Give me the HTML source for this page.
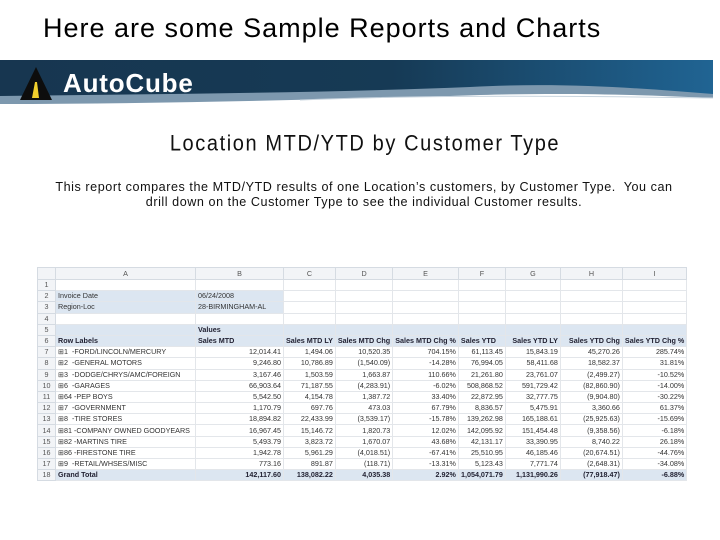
<!DOCTYPE html>
<html><head><meta charset="utf-8"><style>
body{margin:0;width:720px;height:540px;background:#fff;overflow:hidden;position:relative;font-family:"Liberation Sans",sans-serif}
.t{position:absolute;left:43px;top:13px;font-size:27px;color:#000;letter-spacing:1px;white-space:nowrap}
.h2{position:absolute;left:0;width:730px;text-align:center;top:133px;font-size:20px;color:#111;letter-spacing:1.6px;transform:scaleY(1.1)}
.p{position:absolute;left:0;width:728px;text-align:center;top:180px;font-size:12.6px;line-height:15px;color:#111;letter-spacing:0.55px;white-space:nowrap}
table{position:absolute;left:37px;top:267px;border-collapse:collapse;table-layout:fixed;font-size:7.2px;color:#333}
td{height:10.2px;padding:0 2px;border:1px solid #e3e6ea;white-space:nowrap;overflow:hidden;line-height:10px}
tr.hd td{height:11px;background:#f2f4f7;text-align:center;color:#555;border-color:#d5dbe2}
td.n{background:#f2f4f7;text-align:center;color:#555;border-color:#d5dbe2}
.bl td{background:#dce6f1;font-weight:bold;color:#223}
.bl td.n{background:#f2f4f7;color:#555;font-weight:normal}
td.r{text-align:right}
.lb{background:#dce6f1}
</style></head><body>
<div class="t">Here are some Sample Reports and Charts</div>
<svg style="position:absolute;left:0;top:60px" width="720" height="50">
<defs><linearGradient id="g" x1="0" x2="1"><stop offset="0" stop-color="#173650"/><stop offset="0.55" stop-color="#163a55"/><stop offset="1" stop-color="#206493"/></linearGradient></defs>
<path d="M0 0H713V38C600 33 540 33 450 36C300 40 150 44 0 44Z" fill="#7d98ae"/>
<path d="M0 0H713V34C640 28 560 22 470 27C320 33 160 34 0 36Z" fill="url(#g)"/>
<path d="M300 40C400 36 520 35 713 38" stroke="#c8d4de" stroke-width="1" fill="none"/>
<polygon points="36,7 20,40 52,40" fill="#0d0d0d"/>
<polygon points="35,22 32,38 39,38 37,22" fill="#f2cf2d"/>
<text x="63" y="32" font-family="Liberation Sans" font-weight="bold" font-size="26" letter-spacing="0.8" fill="#fff">AutoCube</text>
</svg>
<div class="h2">Location MTD/YTD by Customer Type</div>
<div class="p">This report compares the MTD/YTD results of one Location’s customers, by Customer Type.&nbsp; You can<br>drill down on the Customer Type to see the individual Customer results.</div>
<table>
<colgroup><col style="width:18px"><col style="width:140px"><col style="width:88px"><col style="width:50px"><col style="width:55px"><col style="width:65px"><col style="width:47px"><col style="width:55px"><col style="width:62px"><col style="width:61px"></colgroup>
<tr class="hd"><td></td><td>A</td><td>B</td><td>C</td><td>D</td><td>E</td><td>F</td><td>G</td><td>H</td><td>I</td></tr>
<tr><td class="n">1</td><td></td><td></td><td></td><td></td><td></td><td></td><td></td><td></td><td></td></tr>
<tr><td class="n">2</td><td class="lb">Invoice Date</td><td class="lb">06/24/2008</td><td></td><td></td><td></td><td></td><td></td><td></td><td></td></tr>
<tr><td class="n">3</td><td class="lb">Region-Loc</td><td class="lb">28-BIRMINGHAM-AL</td><td></td><td></td><td></td><td></td><td></td><td></td><td></td></tr>
<tr><td class="n">4</td><td></td><td></td><td></td><td></td><td></td><td></td><td></td><td></td><td></td></tr>
<tr class="bl"><td class="n">5</td><td></td><td>Values</td><td></td><td></td><td></td><td></td><td></td><td></td><td></td></tr>
<tr class="bl"><td class="n">6</td><td>Row Labels</td><td>Sales MTD</td><td class="r">Sales MTD LY</td><td class="r">Sales MTD Chg</td><td class="r">Sales MTD Chg %</td><td>Sales YTD</td><td class="r">Sales YTD LY</td><td class="r">Sales YTD Chg</td><td class="r">Sales YTD Chg %</td></tr>
<tr><td class="n">7</td><td>⊞1 &nbsp;-FORD/LINCOLN/MERCURY</td><td class="r">12,014.41</td><td class="r">1,494.06</td><td class="r">10,520.35</td><td class="r">704.15%</td><td class="r">61,113.45</td><td class="r">15,843.19</td><td class="r">45,270.26</td><td class="r">285.74%</td></tr>
<tr><td class="n">8</td><td>⊞2 &nbsp;-GENERAL MOTORS</td><td class="r">9,246.80</td><td class="r">10,786.89</td><td class="r">(1,540.09)</td><td class="r">-14.28%</td><td class="r">76,994.05</td><td class="r">58,411.68</td><td class="r">18,582.37</td><td class="r">31.81%</td></tr>
<tr><td class="n">9</td><td>⊞3 &nbsp;-DODGE/CHRYS/AMC/FOREIGN</td><td class="r">3,167.46</td><td class="r">1,503.59</td><td class="r">1,663.87</td><td class="r">110.66%</td><td class="r">21,261.80</td><td class="r">23,761.07</td><td class="r">(2,499.27)</td><td class="r">-10.52%</td></tr>
<tr><td class="n">10</td><td>⊞6 &nbsp;-GARAGES</td><td class="r">66,903.64</td><td class="r">71,187.55</td><td class="r">(4,283.91)</td><td class="r">-6.02%</td><td class="r">508,868.52</td><td class="r">591,729.42</td><td class="r">(82,860.90)</td><td class="r">-14.00%</td></tr>
<tr><td class="n">11</td><td>⊞64 -PEP BOYS</td><td class="r">5,542.50</td><td class="r">4,154.78</td><td class="r">1,387.72</td><td class="r">33.40%</td><td class="r">22,872.95</td><td class="r">32,777.75</td><td class="r">(9,904.80)</td><td class="r">-30.22%</td></tr>
<tr><td class="n">12</td><td>⊞7 &nbsp;-GOVERNMENT</td><td class="r">1,170.79</td><td class="r">697.76</td><td class="r">473.03</td><td class="r">67.79%</td><td class="r">8,836.57</td><td class="r">5,475.91</td><td class="r">3,360.66</td><td class="r">61.37%</td></tr>
<tr><td class="n">13</td><td>⊞8 &nbsp;-TIRE STORES</td><td class="r">18,894.82</td><td class="r">22,433.99</td><td class="r">(3,539.17)</td><td class="r">-15.78%</td><td class="r">139,262.98</td><td class="r">165,188.61</td><td class="r">(25,925.63)</td><td class="r">-15.69%</td></tr>
<tr><td class="n">14</td><td>⊞81 -COMPANY OWNED GOODYEARS</td><td class="r">16,967.45</td><td class="r">15,146.72</td><td class="r">1,820.73</td><td class="r">12.02%</td><td class="r">142,095.92</td><td class="r">151,454.48</td><td class="r">(9,358.56)</td><td class="r">-6.18%</td></tr>
<tr><td class="n">15</td><td>⊞82 -MARTINS TIRE</td><td class="r">5,493.79</td><td class="r">3,823.72</td><td class="r">1,670.07</td><td class="r">43.68%</td><td class="r">42,131.17</td><td class="r">33,390.95</td><td class="r">8,740.22</td><td class="r">26.18%</td></tr>
<tr><td class="n">16</td><td>⊞86 -FIRESTONE TIRE</td><td class="r">1,942.78</td><td class="r">5,961.29</td><td class="r">(4,018.51)</td><td class="r">-67.41%</td><td class="r">25,510.95</td><td class="r">46,185.46</td><td class="r">(20,674.51)</td><td class="r">-44.76%</td></tr>
<tr><td class="n">17</td><td>⊞9 &nbsp;-RETAIL/WHSES/MISC</td><td class="r">773.16</td><td class="r">891.87</td><td class="r">(118.71)</td><td class="r">-13.31%</td><td class="r">5,123.43</td><td class="r">7,771.74</td><td class="r">(2,648.31)</td><td class="r">-34.08%</td></tr>
<tr class="bl"><td class="n">18</td><td>Grand Total</td><td class="r">142,117.60</td><td class="r">138,082.22</td><td class="r">4,035.38</td><td class="r">2.92%</td><td class="r">1,054,071.79</td><td class="r">1,131,990.26</td><td class="r">(77,918.47)</td><td class="r">-6.88%</td></tr>
</table>
</body></html>
